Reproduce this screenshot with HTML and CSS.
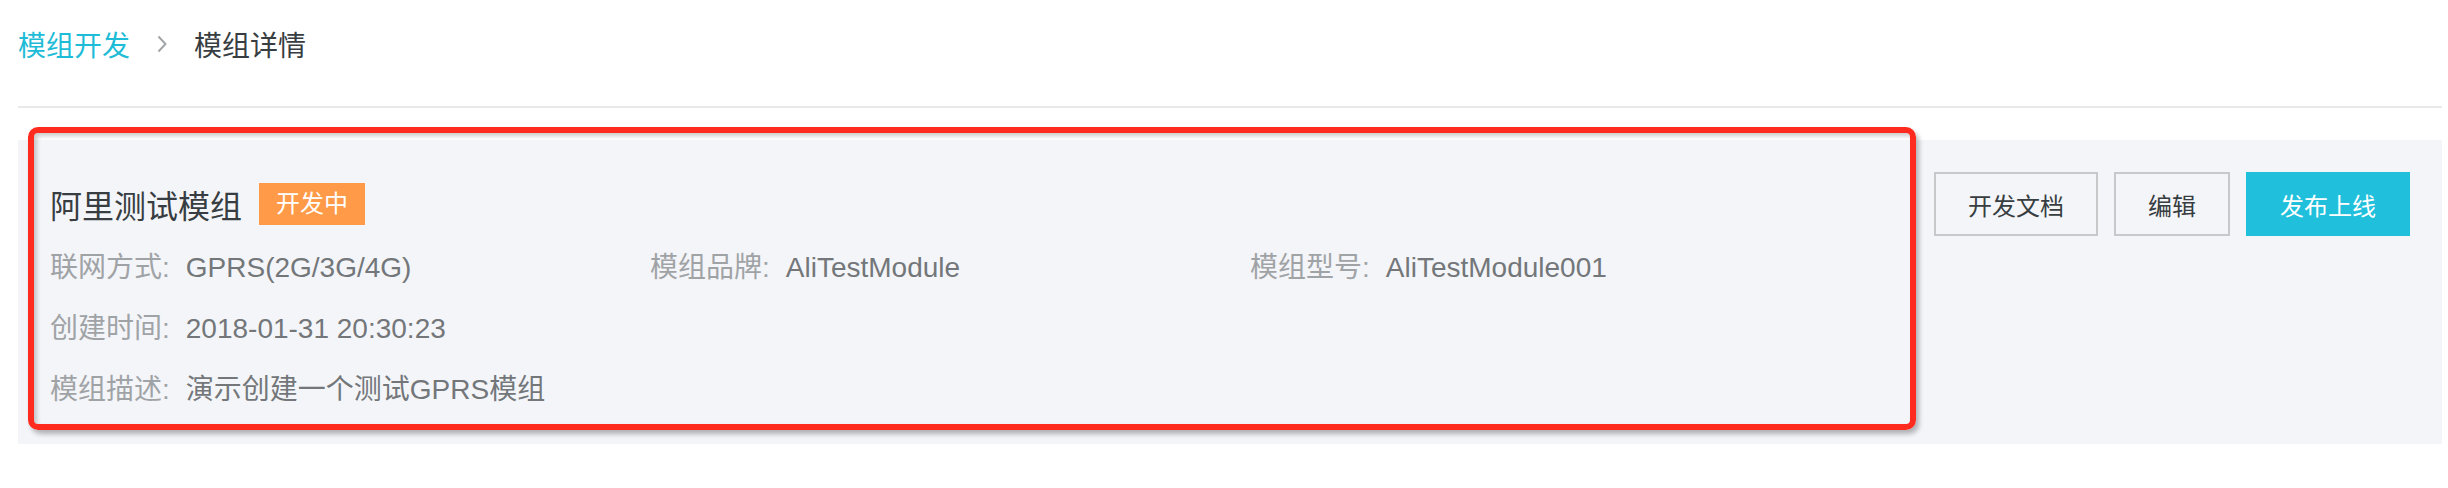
FILE: index.html
```html
<!DOCTYPE html>
<html lang="zh-CN">
<head>
    <meta charset="UTF-8">
    <title>模组详情</title>
    <link rel="stylesheet" href="styles.css">
</head>
<body>
    <div class="breadcrumb">
        <a class="crumb-link">模组开发</a>
        <svg class="crumb-sep" width="10" height="18" viewBox="0 0 10 18">
            <polyline points="1.5,1.5 8.5,9 1.5,16.5" fill="none" stroke="#a3a6a9" stroke-width="2"/>
        </svg>
        <span class="crumb-current">模组详情</span>
    </div>

    <div class="module-panel">
        <!-- highlight frame drawn over the info block -->
        <div class="highlight"></div>

        <div class="module-info">
            <div class="title-row">
                <h2 class="module-name">阿里测试模组</h2>
                <span class="status-tag">开发中</span>
            </div>
            <div class="info-grid">
                <div class="info-item"><span class="label">联网方式:</span><span class="value">GPRS(2G/3G/4G)</span></div>
                <div class="info-item"><span class="label">模组品牌:</span><span class="value">AliTestModule</span></div>
                <div class="info-item"><span class="label">模组型号:</span><span class="value">AliTestModule001</span></div>
                <div class="info-item"><span class="label">创建时间:</span><span class="value">2018-01-31 20:30:23</span></div>
                <div class="info-item full"><span class="label">模组描述:</span><span class="value">演示创建一个测试GPRS模组</span></div>
            </div>
        </div>

        <div class="actions">
            <button class="btn">开发文档</button>
            <button class="btn">编辑</button>
            <button class="btn primary">发布上线</button>
        </div>
    </div>
</body>
</html>
```

FILE: styles.css
```css
body {
    margin: 0;
    padding: 0 6px 0 18px;
    background-color: #ffffff;
    font-family: "Liberation Sans", "Noto Sans CJK SC", sans-serif;
    color: #373d41;
}
.breadcrumb {
    display: flex;
    align-items: center;
    height: 64px;
    padding-top: 12px;
    padding-bottom: 30px;
    border-bottom: 2px solid #e8e9eb;
    font-size: 28px;
}
.crumb-link {
    color: #1fbcd7;
}
.crumb-sep {
    margin: 0 27px 0 27px;
}
.crumb-current {
    color: #373d41;
}
.module-panel {
    position: relative;
    display: flex;
    justify-content: space-between;
    align-items: flex-start;
    margin-top: 32px;
    height: 304px;
    box-sizing: border-box;
    padding: 32px 32px 0 32px;
    background-color: #f4f5f9;
}
.highlight {
    position: absolute;
    left: 10px;
    top: -13px;
    width: 1888px;
    height: 303px;
    box-sizing: border-box;
    border: 6px solid #ff2b1e;
    border-radius: 10px;
    box-shadow: 3px 4px 5px rgba(0, 0, 0, 0.28), inset 3px 3px 4px rgba(0, 0, 0, 0.2);
    pointer-events: none;
}
.module-info {
    padding-top: 11px;
}
.title-row {
    display: flex;
    align-items: center;
    gap: 17px;
    height: 42px;
}
.module-name {
    margin: 0;
    font-size: 32px;
    font-weight: normal;
    color: #373d41;
}
.status-tag {
    height: 42px;
    line-height: 42px;
    padding: 0 17px;
    font-size: 24px;
    color: #ffffff;
    background-color: #ff9a48;
}
.info-grid {
    display: grid;
    grid-template-columns: 600px 600px 600px;
    row-gap: 25px;
    margin-top: 25px;
}
.info-item {
    font-size: 28px;
    line-height: 36px;
    white-space: nowrap;
}
.info-item.full {
    grid-column: 1 / 4;
}
.label {
    color: #a0a3a6;
    margin-right: 16px;
}
.value {
    color: #73777a;
}
.actions {
    display: flex;
    gap: 16px;
}
.btn {
    height: 64px;
    padding: 0 32px;
    font-family: "Liberation Sans", "Noto Sans CJK SC", sans-serif;
    font-size: 24px;
    color: #373d41;
    background-color: transparent;
    border: 2px solid #c6c8ca;
    border-radius: 0;
    cursor: pointer;
}
.btn.primary {
    color: #ffffff;
    background-color: #20c0dc;
    border-color: #20c0dc;
}
```
